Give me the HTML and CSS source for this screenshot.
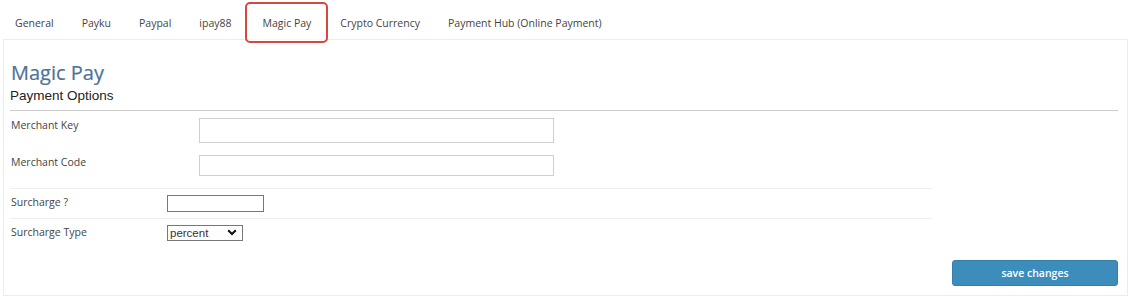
FILE: index.html
```html
<!DOCTYPE html>
<html>
<head>
  <title>Payment Settings</title>
  <meta charset="UTF-8">
  <link rel="stylesheet" href="styles.css">
</head>
<body>
  <ul class="tabs">
    <li class="tab">General</li>
    <li class="tab">Payku</li>
    <li class="tab">Paypal</li>
    <li class="tab">ipay88</li>
    <li class="tab active">Magic Pay</li>
    <li class="tab">Crypto Currency</li>
    <li class="tab">Payment Hub (Online Payment)</li>
  </ul>
  <div class="panel">
    <h2 class="title">Magic Pay</h2>
    <h4 class="subtitle">Payment Options</h4>
    <hr class="divider">
    <div class="field">
      <label class="field-label">Merchant Key</label>
      <input type="text" class="text-input tall">
    </div>
    <div class="field">
      <label class="field-label">Merchant Code</label>
      <input type="text" class="text-input">
    </div>
    <div class="options">
      <div class="option-row">
        <label class="option-label">Surcharge ?</label>
        <input type="text" class="small-input">
      </div>
      <div class="option-row">
        <label class="option-label">Surcharge Type</label>
        <span class="select-wrap">
          <select class="select">
            <option>percent</option>
            <option>fixed</option>
          </select>
          <svg class="chevron" width="10" height="7" viewBox="0 0 10 7"><path d="M1.2 1.2 L5 5 L8.8 1.2" fill="none" stroke="#111" stroke-width="2"/></svg>
        </span>
      </div>
    </div>
    <div class="actions">
      <button class="save-btn">save changes</button>
    </div>
  </div>
</body>
</html>
```

FILE: styles.css
```css
body {
  margin: 0;
  padding: 0;
  background-color: #ffffff;
  font-family: 'Open Sans', 'Noto Sans', sans-serif;
  color: #444444;
}
.tabs {
  list-style: none;
  margin: 0 0 0 1px;
  padding: 2px 0 0 0;
  display: flex;
  height: 37px;
  position: relative;
  z-index: 2;
}
.tab {
  padding: 0 12px;
  height: 41px;
  box-sizing: border-box;
  display: flex;
  align-items: center;
  font-size: 10.5px;
  color: #444444;
  border: 2px solid transparent;
  border-radius: 5px;
}
.tab.active {
  border-color: #d6483f;
  background: rgba(255, 255, 255, 0.6);
  padding: 0 15px 0 16px;
  margin: 0 -2px 0 -1px;
}
.panel {
  margin: 0 7px 0 3px;
  border: 1px solid #ececec;
  padding: 0 9px 0 6px;
  height: 257px;
  box-sizing: border-box;
}
.title {
  margin: 20px 0 0 1px;
  font-size: 20px;
  font-weight: normal;
  line-height: 26px;
  color: #4d7396;
  -webkit-text-stroke: 0.2px #4d7396;
}
.subtitle {
  margin: 1px 0 0 0;
  font-family: 'Liberation Sans', Arial, sans-serif;
  font-size: 13.5px;
  font-weight: normal;
  line-height: 18px;
  color: #222222;
}
.divider {
  border: 0;
  border-top: 1px solid #cccccc;
  margin: 5px 0 7px 0;
}
.field {
  display: flex;
  align-items: flex-start;
  margin-bottom: 12px;
}
.field-label {
  width: 188px;
  padding: 0 0 0 1px;
  font-size: 10.5px;
  color: #444444;
}
.text-input {
  width: 355px;
  height: 21px;
  box-sizing: border-box;
  border: 1px solid #cfcfcf;
  padding: 2px 6px;
  margin: 0;
}
.text-input.tall {
  height: 25px;
}
.options {
  width: 922px;
  border-top: 1px solid #eeeeee;
  margin-top: 1px;
}
.option-row {
  display: flex;
  align-items: flex-start;
  padding: 6px 0 6px 0;
  border-bottom: 1px solid #eeeeee;
}
.option-row:last-child {
  border-bottom: 0;
}
.option-label {
  width: 156px;
  padding: 0 0 0 1px;
  font-size: 10.5px;
  color: #444444;
}
.small-input {
  width: 97px;
  height: 17px;
  box-sizing: border-box;
  border: 1px solid #777777;
  margin: 0;
  padding: 0 3px;
}
.select-wrap {
  position: relative;
  display: flex;
}
.select {
  width: 76px;
  height: 16px;
  box-sizing: border-box;
  border: 1px solid #777777;
  border-radius: 0;
  background: #ffffff;
  appearance: none;
  -webkit-appearance: none;
  font-family: 'Liberation Sans', Arial, sans-serif;
  font-size: 11.5px;
  line-height: 14px;
  color: #333333;
  padding: 0 0 0 2px;
  margin: 0;
  outline: none;
}
.chevron {
  position: absolute;
  right: 6px;
  top: 4px;
  pointer-events: none;
}
.actions {
  display: flex;
  justify-content: flex-end;
  margin-top: 13px;
}
.save-btn {
  width: 166px;
  height: 26px;
  background-color: #3c8dbc;
  border: 1px solid #367fa9;
  border-radius: 3px;
  color: #ffffff;
  font-family: 'Open Sans', 'Noto Sans', sans-serif;
  font-size: 10.5px;
  font-weight: 600;
  cursor: pointer;
}
```
